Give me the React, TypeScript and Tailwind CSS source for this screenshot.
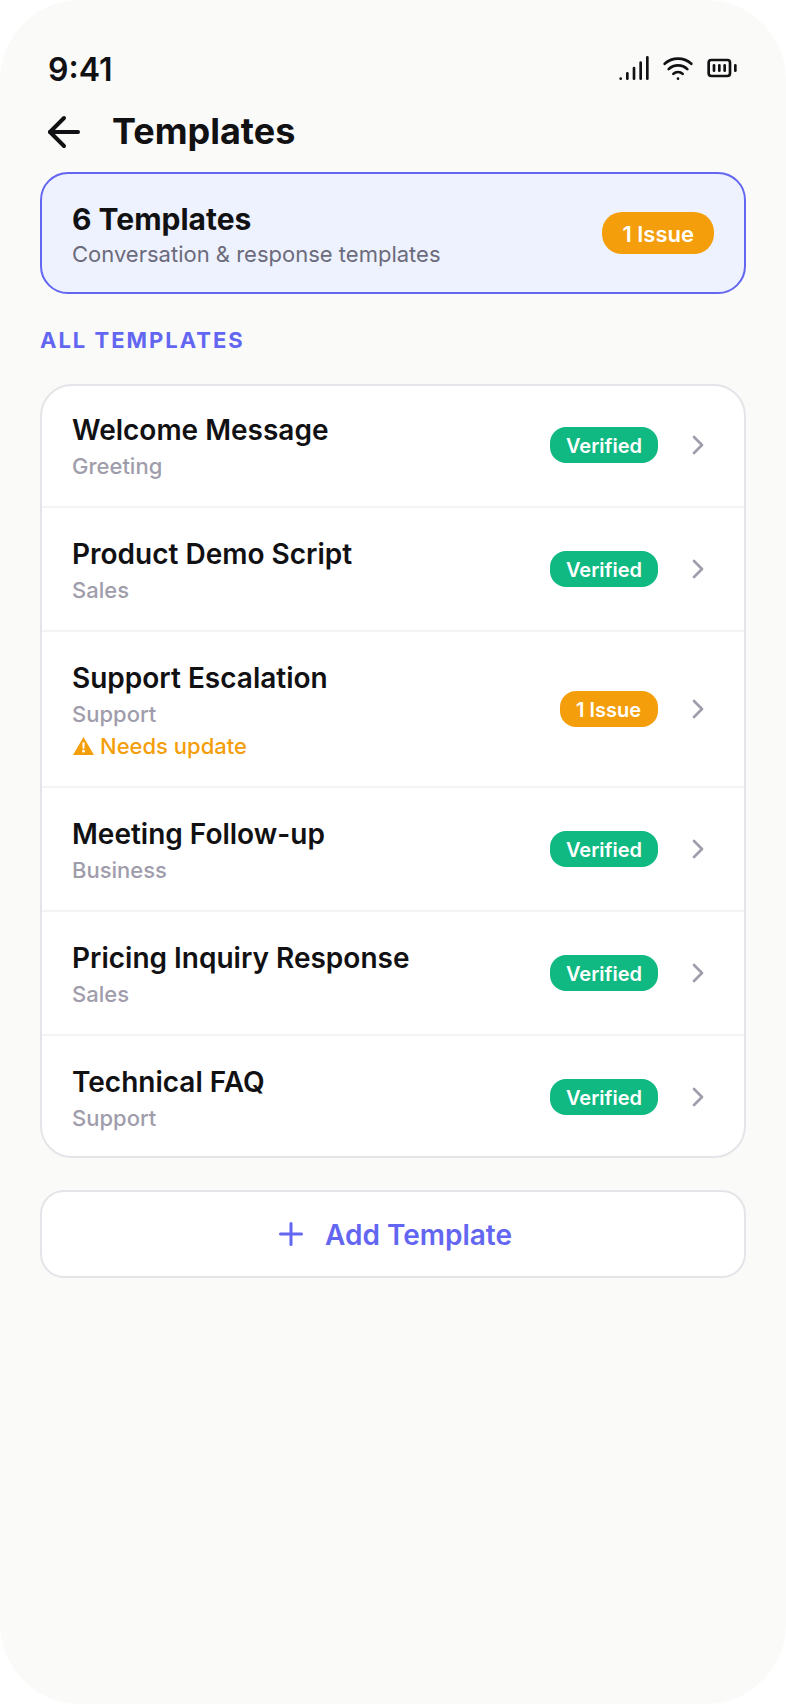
import React from 'react';
import {
  ArrowLeft,
  BatteryFull,
  ChevronRight,
  Plus,
  Signal,
  Wifi,
} from 'lucide-react';

interface Template {
  name: string;
  category: string;
  issues: number;
  warning?: string;
}

const TEMPLATES: Template[] = [
  { name: 'Welcome Message', category: 'Greeting', issues: 0 },
  { name: 'Product Demo Script', category: 'Sales', issues: 0 },
  { name: 'Support Escalation', category: 'Support', issues: 1, warning: 'Needs update' },
  { name: 'Meeting Follow-up', category: 'Business', issues: 0 },
  { name: 'Pricing Inquiry Response', category: 'Sales', issues: 0 },
  { name: 'Technical FAQ', category: 'Support', issues: 0 },
];

const StatusBar: React.FC = () => (
  <div className="flex h-[39px] items-center justify-between px-12">
    <span className="text-[32px] leading-[39px] font-semibold">9:41</span>
    <div className="flex items-center gap-3 pb-[3px]">
      <Signal size={32} />
      <Wifi size={32} />
      <BatteryFull size={32} />
    </div>
  </div>
);

const WarningIcon: React.FC = () => (
  <svg width="21" height="18" viewBox="0 0 21 18" className="mb-px ml-px shrink-0">
    <path d="M10.5 0 L21 18 H0 Z" fill="#f59e0b" />
    <path d="M9.3 5.6 H11.7 L11.3 11.8 H9.7 Z" fill="#fff" />
    <circle cx="10.5" cy="14.2" r="1.4" fill="#fff" />
  </svg>
);

const TemplateRow: React.FC<{ template: Template }> = ({ template }) => {
  const { name, category, issues, warning } = template;

  return (
    <div className="flex items-center border-b-2 border-[#f4f4f6] px-8 py-[25px] last:border-b-0">
      <div className="flex-1">
        <h4 className="text-[28px] leading-[42px] font-semibold">{name}</h4>
        <p className="text-[22px] leading-[30px] font-medium text-[#9f9dab]">{category}</p>
        {warning && (
          <p className="mt-0.5 flex items-center gap-1.5 text-[22px] leading-[30px] font-medium text-[#f59e0b]">
            <WarningIcon />
            {warning}
          </p>
        )}
      </div>
      <span
        className={`mr-6 flex h-9 min-w-[98px] items-center rounded-[16px] px-4 pt-0.5 text-[20px] font-semibold text-white ${
          issues > 0 ? 'bg-[#f59e0b]' : 'bg-[#10b981]'
        }`}
      >
        {issues > 0 ? `${issues} Issue` : 'Verified'}
      </span>
      <ChevronRight size={32} className="text-[#9f9dab]" />
    </div>
  );
};

export default function App() {
  return (
    <div className="bg-white">
      <div className="h-[1704px] w-[786px] rounded-[80px] bg-[#fafaf9] pt-[50px] font-['Inter',sans-serif] text-[#111113]">
        <StatusBar />

        <header className="mt-[19px] flex h-12 items-center gap-6 px-10">
          <ArrowLeft size={48} />
          <h1 className="pb-0.5 text-[36px] leading-[44px] font-bold">Templates</h1>
        </header>

        <main className="px-10 pt-4">
          {/* Summary */}
          <section className="flex items-center justify-between rounded-[28px] bg-[#eef2ff] px-8 py-[26px] outline-2 -outline-offset-2 outline-[#6366f1]">
            <div>
              <h2 className="text-[30px] leading-[42px] font-bold">6 Templates</h2>
              <p className="text-[22px] leading-[28px] text-[#6b6b7b]">
                Conversation &amp; response templates
              </p>
            </div>
            <span className="flex h-[42px] items-center rounded-[20px] bg-[#f59e0b] px-5 pt-0.5 text-[22px] font-semibold text-white">
              1 Issue
            </span>
          </section>

          <h3 className="mt-8 text-[22px] leading-[28px] font-bold tracking-[2px] text-[#6366f1]">
            ALL TEMPLATES
          </h3>

          {/* List */}
          <section className="mt-[30px] overflow-hidden rounded-[32px] bg-white outline-2 -outline-offset-2 outline-[#e4e4e9]">
            {TEMPLATES.map((template) => (
              <TemplateRow key={template.name} template={template} />
            ))}
          </section>

          <button className="mt-8 flex h-[88px] w-full items-center justify-center gap-4 rounded-[24px] bg-white pr-px text-[28px] font-semibold text-[#6366f1] outline-2 -outline-offset-2 outline-[#e4e4e9]">
            <Plus size={36} />
            <span className="pt-0.5">Add Template</span>
          </button>
        </main>
      </div>
    </div>
  );
}
